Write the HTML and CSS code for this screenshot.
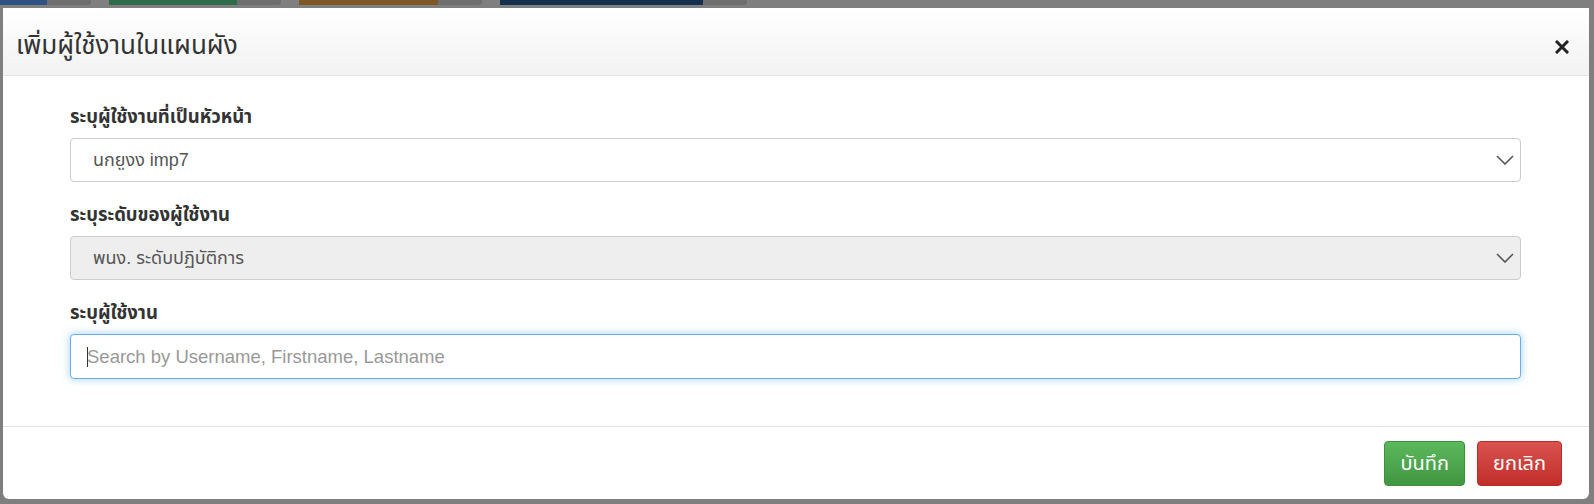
FILE: index.html
```html
<!DOCTYPE html>
<html lang="th">
<head>
  <meta charset="UTF-8">
  <meta name="viewport" content="width=device-width, initial-scale=1.0">
  <title>เพิ่มผู้ใช้งานในแผนผัง</title>
  <link rel="stylesheet" href="styles.css">
</head>
<body>
  <!-- buttons of the page behind the dialog, dimmed by the backdrop -->
  <div class="page-strip">
    <span class="tab tab-blue"></span><span class="tab tab-gray"></span>
    <span class="tab tab-green"></span><span class="tab tab-gray"></span>
    <span class="tab tab-orange"></span><span class="tab tab-gray"></span>
    <span class="tab tab-navy"></span><span class="tab tab-gray"></span>
  </div>

  <div class="modal">
    <div class="modal-header">
      <h4 class="modal-title">เพิ่มผู้ใช้งานในแผนผัง</h4>
      <button type="button" class="close" aria-label="Close">
        <svg width="14" height="14" viewBox="0 0 14 14">
          <path d="M2 2 L12 12 M12 2 L2 12" stroke="#222" stroke-width="3" stroke-linecap="square"/>
        </svg>
      </button>
    </div>

    <div class="modal-body">
      <div class="form-group">
        <label for="parent">ระบุผู้ใช้งานที่เป็นหัวหน้า</label>
        <div class="select-wrap">
          <select id="parent" class="form-control">
            <option>นกยูงง imp7</option>
          </select>
          <svg class="chevron" width="18" height="10" viewBox="0 0 18 10">
            <path d="M1 1 L9 9 L17 1" fill="none" stroke="#555" stroke-width="1.6"/>
          </svg>
        </div>
      </div>

      <div class="form-group">
        <label for="level">ระบุระดับของผู้ใช้งาน</label>
        <div class="select-wrap">
          <select id="level" class="form-control" disabled>
            <option>พนง. ระดับปฏิบัติการ</option>
          </select>
          <svg class="chevron" width="18" height="10" viewBox="0 0 18 10">
            <path d="M1 1 L9 9 L17 1" fill="none" stroke="#555" stroke-width="1.6"/>
          </svg>
        </div>
      </div>

      <div class="form-group">
        <label for="user">ระบุผู้ใช้งาน</label>
        <div class="input-wrap">
          <input type="text" id="user" class="form-control focused" placeholder="Search by Username, Firstname, Lastname">
          <span class="caret"></span>
        </div>
      </div>
    </div>

    <div class="modal-footer">
      <button type="button" class="btn btn-success">บันทึก</button>
      <button type="button" class="btn btn-danger">ยกเลิก</button>
    </div>
  </div>
</body>
</html>
```

FILE: styles.css
```css
body {
  margin: 0;
  background-color: #7f7f7f;
  font-family: "Liberation Sans", "Noto Sans Thai", "Noto Sans", "DejaVu Sans", sans-serif;
  color: #333;
  overflow: hidden;
}

.page-strip {
  display: flex;
  height: 5px;
  margin-bottom: 3px;
}

.tab {
  display: block;
  height: 5px;
}

.tab-gray {
  width: 44px;
  background-color: #6e6e6e;
  border-radius: 0 0 3px 0;
  margin-right: 18px;
}

.tab-blue { width: 47px; background-color: #2e5382; }
.tab-green { width: 128px; background-color: #2e6b4b; }
.tab-orange { width: 139px; background-color: #7d5724; }
.tab-navy { width: 203px; background-color: #15304c; }

.modal {
  margin: 0 5px 0 3px;
  height: 491px;
  background-color: #fff;
  border-radius: 0 0 6px 6px;
  display: flex;
  flex-direction: column;
}

.modal-header {
  flex-shrink: 0;
  display: flex;
  align-items: center;
  justify-content: space-between;
  height: 68px;
  padding: 0 20px 0 13px;
  box-sizing: border-box;
  background-image: linear-gradient(to bottom, #fff 0%, #f2f2f2 100%);
  border-bottom: 1px solid #e5e5e5;
}

.modal-title {
  margin: 9px 0 0;
  font-size: 26px;
  font-weight: normal;
  font-stretch: 70%;
  color: #333;
}

.close {
  border: none;
  background: none;
  padding: 0;
  width: 14px;
  height: 14px;
  margin-top: 10px;
  cursor: pointer;
}

.modal-body {
  flex-shrink: 0;
  padding: 28px 68px 32px 67px;
}

.form-group {
  margin-bottom: 20px;
}

.form-group:last-child {
  margin-bottom: 15px;
}

label {
  display: block;
  font-size: 18.5px;
  font-weight: bold;
  line-height: 26px;
  margin-bottom: 8px;
}

.select-wrap,
.input-wrap {
  position: relative;
}

.chevron {
  position: absolute;
  right: 7px;
  top: 17px;
  pointer-events: none;
}

.caret {
  position: absolute;
  left: 17px;
  top: 13px;
  width: 1px;
  height: 20px;
  background-color: #333;
}

.form-control {
  display: block;
  width: 100%;
  height: 44px;
  box-sizing: border-box;
  border: 1px solid #ccc;
  border-radius: 4px;
  background-color: #fff;
  color: #555;
  font-family: inherit;
  font-size: 18px;
  padding: 0 16px;
}

input.form-control {
  height: 45px;
  font-size: 18.5px;
}

select.form-control {
  appearance: none;
  -webkit-appearance: none;
  padding-left: 22px;
}

select.form-control:disabled {
  background-color: #eee;
  color: #555;
  opacity: 1;
}

.form-control.focused,
.form-control:focus {
  border-color: #66afe9;
  outline: none;
  box-shadow: 0 0 8px rgba(102, 175, 233, 0.6);
}

.form-control::placeholder {
  color: #999;
}

.modal-footer {
  flex-shrink: 0;
  margin-top: auto;
  display: flex;
  justify-content: flex-end;
  gap: 12px;
  padding: 14px 27px 13px;
  border-top: 1px solid #e5e5e5;
}

.btn {
  height: 45px;
  padding: 0 15px;
  border-radius: 4px;
  border: 1px solid transparent;
  color: #fff;
  font-family: inherit;
  font-size: 20px;
  font-stretch: 80%;
  cursor: pointer;
}

.btn-success {
  background-image: linear-gradient(to bottom, #5cb85c 0%, #419641 100%);
  border-color: #3e8f3e;
}

.btn-danger {
  background-image: linear-gradient(to bottom, #d9534f 0%, #c12e2a 100%);
  border-color: #b92c28;
}
```
